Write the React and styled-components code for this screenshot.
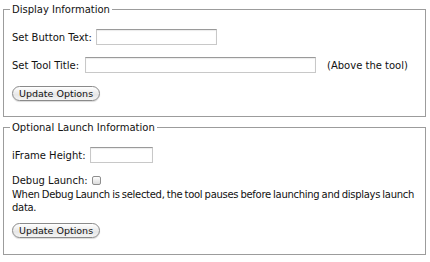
import React from 'react'
import styled, { createGlobalStyle } from 'styled-components'

const Global = createGlobalStyle`
  html, body {
    margin: 0;
    background: #fff;
  }
  body {
    font-family: "DejaVu Sans", Verdana, sans-serif;
    font-size: 10px;
    color: #111;
  }
`

const Page = styled.div`
  width: 430px;
  padding: 3px 4px 0 3px;
  box-sizing: border-box;
  display: flex;
  flex-direction: column;
  gap: 4px;
`

const Box = styled.fieldset`
  margin: 0;
  padding: ${props => props.$pad};
  border: 1px solid #9c9c9c;
  display: flex;
  flex-direction: column;
  min-width: 0;
`

const Legend = styled.legend`
  padding: 0 2px;
  margin-left: -2px;
  font-size: 10px;
  line-height: 13px;
`

const Row = styled.div`
  display: flex;
  align-items: center;
  gap: ${props => props.$gap || 4}px;
  height: 16px;
  margin-top: ${props => props.$mt || 0}px;
`

const Label = styled.label`
  white-space: nowrap;
`

const TextInput = styled.input`
  box-sizing: border-box;
  width: ${props => props.$w}px;
  height: 16px;
  margin: 0;
  padding: 0 2px;
  border: 1px solid #c8c8c8;
  border-top-color: #9a9a9a;
  box-shadow: inset 0 1px 1px rgba(0, 0, 0, 0.08);
  font: inherit;
`

const Hint = styled.span`
  margin-left: 5px;
`

const Check = styled.span`
  display: inline-block;
  width: 9px;
  height: 9px;
  border: 1px solid #8e8e8e;
  border-radius: 2px;
  background: linear-gradient(#fdfdfd, #dcdcdc);
  box-sizing: border-box;
`

const Note = styled.p`
  margin: 0;
  line-height: 13px;
  letter-spacing: -0.3px;
  word-spacing: -0.6px;
`

const Button = styled.button`
  align-self: flex-start;
  margin-top: ${props => props.$mt}px;
  height: 15px;
  padding: 0 6px;
  border: 1px solid #8a8a8a;
  border-radius: 8px;
  background: linear-gradient(#ffffff, #e6e6e6 60%, #f4f4f4);
  box-shadow: 0 1px 1px rgba(0, 0, 0, 0.15);
  font: inherit;
  font-size: 9.5px;
  line-height: 13px;
  color: #111;
`

export default function App() {
  return (
    <>
      <Global />
      <Page>
        <Box $pad="0 8px 15px 8px">
          <Legend>Display Information</Legend>
          <Row $mt={13}>
            <Label>Set Button Text:</Label>
            <TextInput $w={121} />
          </Row>
          <Row $mt={12} $gap={6}>
            <Label>Set Tool Title:</Label>
            <TextInput $w={231} />
            <Hint>(Above the tool)</Hint>
          </Row>
          <Button $mt={13}>Update Options</Button>
        </Box>
        <Box $pad="0 8px 16px 8px">
          <Legend>Optional Launch Information</Legend>
          <Row $mt={13}>
            <Label>iFrame Height:</Label>
            <TextInput $w={63} />
          </Row>
          <Row $mt={9}>
            <Label>Debug Launch:</Label>
            <Check />
          </Row>
          <Note>When Debug Launch is selected, the tool pauses before launching and displays launch data.</Note>
          <Button $mt={9}>Update Options</Button>
        </Box>
      </Page>
    </>
  )
}
